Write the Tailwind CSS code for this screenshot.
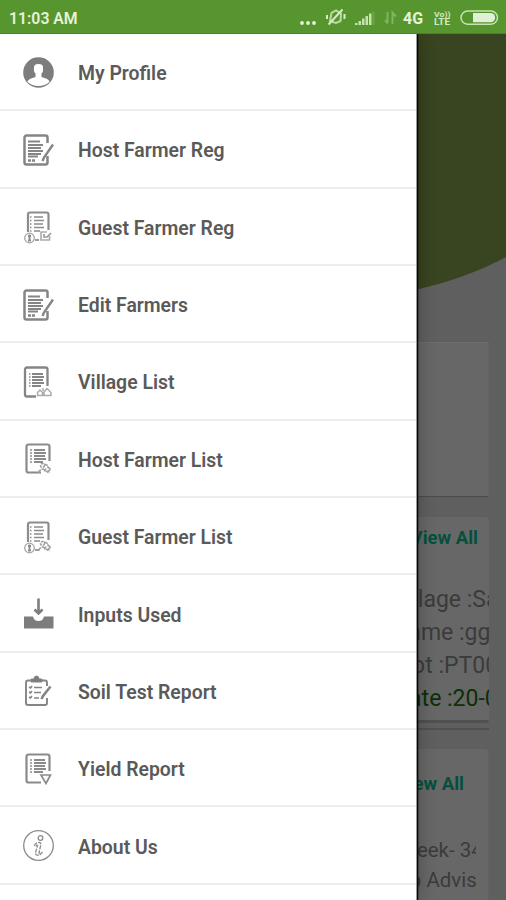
<!DOCTYPE html>
<html lang="en">
<head>
<meta charset="utf-8">
<title>Farmer menu</title>
<script src="https://cdn.jsdelivr.net/npm/@tailwindcss/browser@4"></script>
</head>
<body class="font-['Roboto',sans-serif]">
<svg class="hidden">
  <defs>
    <g id="sheet" fill="none" stroke="#8a8a8a">
      <path d="M17 29.5H4.500a2 2 0 0 1-2-2V3.500a2 2 0 0 1 2-2H23.500a2 2 0 0 1 2 2V18" stroke-width="2.200"/>
      <path d="M10 7H21M10 10H22M10 13H21M10 16H22M10 19H19" stroke-width="1.900"/>
      <path d="M6 7H8M6 10H8M6 13H8M6 16H8M6 19H8" stroke-width="1.500"/>
    </g>
    <g id="edit" fill="none" stroke="#858585">
      <path d="M24.500 9V3.500a2 2 0 0 0-2-2H3.500a2 2 0 0 0-2 2V28.500a2 2 0 0 0 2 2H22.500a2 2 0 0 0 2-2V22" stroke-width="2.500"/>
      <path d="M5 7.500H17M5 11H20M5 14H18M5 17H20M5 20H18M5 22.500H15" stroke-width="1.800"/>
      <path d="M5 26.500H8M9 26.500H12" stroke-width="2.600"/>
      <path d="M30 10.500L21 23.500L19.500 27" stroke-width="2.400"/>
    </g>
    <g id="guest" fill="none" stroke="#8c8c8c">
      <path d="M5 21V3.500a2 2 0 0 1 2-2H23.500a2 2 0 0 1 2 2V19" stroke-width="2.200"/>
      <path d="M11 6H20M11 9.500H21M11 13H20M11 16.500H21M11 20H17" stroke-width="1.700"/>
      <path d="M7 6H8.500M7 9.500H8.500M7 13H8.500M7 16.500H8.500M7 20H8.500" stroke-width="1.400"/>
      <circle cx="6.500" cy="27" r="4.800" stroke-width="1.300" stroke="#a6a6a6"/>
      <path d="M6.500 23.500V30.500M5 25H8M5 29.500H8" stroke-width="1.900"/>
      <path d="M12 29H16" stroke-width="1.700"/>
    </g>
    <g id="people" fill="none" stroke="#a0a0a0" stroke-width="1.600">
      <circle cx="19.500" cy="22.500" r="2" stroke-dasharray="2.500 1"/>
      <path d="M15.500 30Q16.500 26.500 20 26L25.500 29.500M21 21L25 22.500L25 24.500L28 26L25.500 28L27 30M23 25.500L21.500 28.500" stroke-dasharray="4 1"/>
    </g>
  </defs>
</svg>
<div class="relative flex h-[900px] w-[506px] flex-col overflow-hidden bg-[#5f5f5f]">
  <header class="relative z-20 flex h-[34px] shrink-0 items-center justify-between border-b border-[#3f8a18] bg-[#57962f] pl-[9px] text-[#e4f3d9]">
    <span class="pt-[4px] text-[15.800px] leading-none font-semibold">11:03 AM</span>
    <svg class="h-[33px] w-[210px]" viewBox="296 0 210 33" fill="none">
      <g fill="#e4f3d9"><circle cx="302" cy="23" r="1.900"/><circle cx="308" cy="23" r="1.900"/><circle cx="314" cy="23" r="1.900"/></g>
      <g stroke="#b9dba2" stroke-width="2">
        <path d="M330 21L331.500 13L336 10.500L341 13.500L340.500 21L336 23L331 21.500Z"/>
        <path d="M328.500 24.500L342.500 9.500M327 15V19M344.500 14V19" stroke="#d5ebc6"/>
      </g>
      <g fill="#c5e3b1"><path d="M355 23h2.500v2h-2.500zM358.500 21h2.500v4h-2.500zM362 18.500h2.500v6.500h-2.500zM365.500 16h2.500v9h-2.500zM369 13.500h2.500v11.500h-2.500z"/><path d="M372.500 11.500h2v13.500h-2z" fill="#6ca548"/></g>
      <path d="M387.500 12V23M385 20L387.500 23.500M392.500 24V12.500L396 16.500" stroke="#82b563" stroke-width="1.900"/>
      <text x="403" y="23.500" fill="#e4f3d9" font-size="16" font-weight="700" textLength="20" lengthAdjust="spacingAndGlyphs">4G</text>
      <text x="434" y="16.500" fill="#d2eabf" font-size="8" font-weight="700" textLength="16.500" lengthAdjust="spacingAndGlyphs">Vo))</text>
      <text x="434" y="25" fill="#d2eabf" font-size="9" font-weight="700" textLength="16" lengthAdjust="spacingAndGlyphs">LTE</text>
      <rect x="461" y="11" width="36.500" height="13.200" rx="6.600" stroke="#c5e3b1" stroke-width="1.500"/>
      <path d="M473 13H490.500a4.500 4.500 0 0 1 0 9.300H473z" fill="#e0f0d5"/>
    </svg>
  </header>

  <main class="relative flex flex-1 flex-col pr-[17px] pl-[417px] whitespace-nowrap text-[#3b3b3b]">
    <svg class="absolute top-0 left-[417px] h-[260px] w-[89px]" viewBox="417 34 89 260"><path d="M417 34H506V257Q467 278 417 289.500Z" fill="#394420"/></svg>
    <section class="mt-[308px] h-[155px] shrink-0 border-t border-r border-b border-t-[#6c6c6c] border-r-[#646464] border-b-[#4b4b4b] bg-[#676767]"></section>
    <section class="mt-[20px] h-[206px] shrink-0 overflow-hidden rounded-r-sm border-b-3 border-[#505050] bg-[#676767]">
      <div class="flex h-[57px] justify-end pt-[9px] pr-[11px] text-[18.500px] leading-6 font-bold text-[#04503d]">View All</div>
      <div class="ml-[-25px] pt-[9px] text-[23px] leading-[33px]">
        <p>Village :Sarangpur</p>
        <p>Name :ggarden</p>
        <p>Plot :PT001</p>
        <p class="pl-[2px] text-[#0b2f08]">Date :20-08</p>
      </div>
    </section>
    <div class="mt-[5px] h-[2px] w-[72px] shrink-0 bg-[#505050]"></div>
    <section class="mt-[19px] h-[160px] shrink-0 overflow-hidden rounded-r-sm border-r border-[#626262] bg-[#676767]">
      <div class="flex h-[86px] justify-end pt-[23px] pr-[24px] text-[18.500px] leading-6 font-bold text-[#04503d]">View All</div>
      <div class="mr-[12px] overflow-hidden text-[20.500px] leading-[30px]">
        <p class="ml-[-18px]">Week- 34</p>
        <p class="ml-[-39px]">Crop Advisory</p>
      </div>
    </section>
  </main>

  <nav class="absolute top-[34px] left-0 z-10 h-[866px] w-[417px] border-r border-[#999] bg-white text-[19.400px] font-semibold text-[#5a5a5a] shadow-[1px_0_0_#080808,2px_0_0_rgba(0,0,0,0.3),4px_0_14px_rgba(0,0,0,0.2)]">
    <div class="flex h-[77.350px] items-center gap-[23px] border-b-2 border-[#ededed] pt-[2px] pl-[23px]">
      <svg class="size-8" viewBox="0 0 32 32"><circle cx="15.500" cy="15.500" r="15.300" fill="#7d7d7d"/><path d="M11 11Q10.500 7 15.500 7T20 11Q20.500 15 18.500 16.500V20L23 21.500Q26.500 23 26.500 25Q22 29 15.500 29T4.500 25Q4.500 23 8 21.500L12.500 20V16.500Q10.500 15 11 11Z" fill="#fff"/></svg>
      <span class="pt-[2px]">My Profile</span>
    </div>
    <div class="flex h-[77.350px] items-center gap-[23px] border-b-2 border-[#ededed] pt-[2px] pl-[23px]">
      <svg class="size-8" viewBox="0 0 32 32"><use href="#edit"/></svg>
      <span class="pt-[2px]">Host Farmer Reg</span>
    </div>
    <div class="flex h-[77.350px] items-center gap-[23px] border-b-2 border-[#ededed] pt-[2px] pl-[23px]">
      <svg class="size-8 overflow-visible" viewBox="0 0 32 32" fill="none"><use href="#guest"/><path d="M24 21H18V29H26.500V25" stroke="#aaa" stroke-width="1.600"/><path d="M21 23V26H24L28 22" stroke="#999" stroke-width="1.700"/></svg>
      <span class="pt-[2px]">Guest Farmer Reg</span>
    </div>
    <div class="flex h-[77.350px] items-center gap-[23px] border-b-2 border-[#ededed] pt-[2px] pl-[23px]">
      <svg class="size-8" viewBox="0 0 32 32"><use href="#edit"/></svg>
      <span class="pt-[2px]">Edit Farmers</span>
    </div>
    <div class="flex h-[77.350px] items-center gap-[23px] border-b-2 border-[#ededed] pt-[2px] pl-[23px]">
      <svg class="size-8" viewBox="0 0 32 32" fill="none"><g stroke="#858585"><path d="M13 30.500H4a2 2 0 0 1-2-2V3.500a2 2 0 0 1 2-2H22.500a2 2 0 0 1 2 2V20" stroke-width="2.300"/><path d="M9 8H20M9 11H21M9 14H20M9 17H21M9 20H18" stroke-width="1.900"/><path d="M6 8H7.500M6 11H7.500M6 14H7.500M6 17H7.500M6 20H7.500" stroke-width="1.500"/></g><path d="M14.500 29.500V26.500L17 24L19.500 26.500V29.500ZM21 29.500V26L24 22.500L28 26.500V29.500ZM20 25V22" stroke="#aaa" stroke-width="1.500"/></svg>
      <span class="pt-[2px]">Village List</span>
    </div>
    <div class="flex h-[77.350px] items-center gap-[23px] border-b-2 border-[#ededed] pt-[2px] pl-[23px]">
      <svg class="size-8" viewBox="0 0 32 32"><use href="#sheet" x="1"/><use href="#people"/></svg>
      <span class="pt-[2px]">Host Farmer List</span>
    </div>
    <div class="flex h-[77.350px] items-center gap-[23px] border-b-2 border-[#ededed] pt-[2px] pl-[23px]">
      <svg class="size-8 overflow-visible" viewBox="0 0 32 32"><use href="#guest"/><use href="#people"/></svg>
      <span class="pt-[2px]">Guest Farmer List</span>
    </div>
    <div class="flex h-[77.350px] items-center gap-[23px] border-b-2 border-[#ededed] pt-[2px] pl-[23px]">
      <svg class="size-8" viewBox="0 0 32 32"><path d="M1 18.500H10Q11 23 15.500 23T21 18.500H30.500V30.500H1Z" fill="#7d7d7d"/><path d="M15.500 0.500V14M11.500 11.500L15.500 15.500L19.500 11.500" fill="none" stroke="#7d7d7d" stroke-width="2.600"/></svg>
      <span class="pt-[2px]">Inputs Used</span>
    </div>
    <div class="flex h-[77.350px] items-center gap-[23px] border-b-2 border-[#ededed] pt-[2px] pl-[23px]">
      <svg class="size-8" viewBox="0 0 32 32" fill="none" stroke="#858585"><path d="M8 5.500H5a2 2 0 0 0-2 2V28a2 2 0 0 0 2 2H22a2 2 0 0 0 2-2V23M19 5.500H22a2 2 0 0 1 2 2V11" stroke-width="1.900"/><path d="M8 7V4H11Q11 1 13.500 1T16 4H19V7Z" fill="#7d7d7d"/><path d="M6 12L7.500 13L9 11M11 12.500H19M6 17L7.500 18L9 16M11 17.500H18M6 22L7.500 23L9 21M11 23H16" stroke-width="1.600"/><path d="M27.500 11.500L20 21L18.500 24" stroke-width="2.600"/></svg>
      <span class="pt-[2px]">Soil Test Report</span>
    </div>
    <div class="flex h-[77.350px] items-center gap-[23px] border-b-2 border-[#ededed] pt-[2px] pl-[23px]">
      <svg class="size-8" viewBox="0 0 32 32"><use href="#sheet" x="1"/><path d="M18 22H27.500L23 30.500Z" fill="#fff" stroke="#8a8a8a" stroke-width="1.700"/></svg>
      <span class="pt-[2px]">Yield Report</span>
    </div>
    <div class="flex h-[77.350px] items-center gap-[23px] border-b-2 border-[#ededed] pt-[2px] pl-[23px]">
      <svg class="size-8" viewBox="0 0 32 32" fill="none" stroke="#8a8a8a"><circle cx="15.500" cy="15.500" r="14.800" stroke-width="1.300"/><circle cx="17.500" cy="8" r="2.300" stroke-width="1.300"/><path d="M11.500 15.500Q12 12.500 17 12.500Q18.500 13 17.500 16L16 23L19 22.500Q17 26 13.500 25Q12 24 13 21L14.500 15.500Z" stroke-width="1.300" stroke-dasharray="4 1"/></svg>
      <span class="pt-[2px]">About Us</span>
    </div>
  </nav>
</div>
</body>
</html>
